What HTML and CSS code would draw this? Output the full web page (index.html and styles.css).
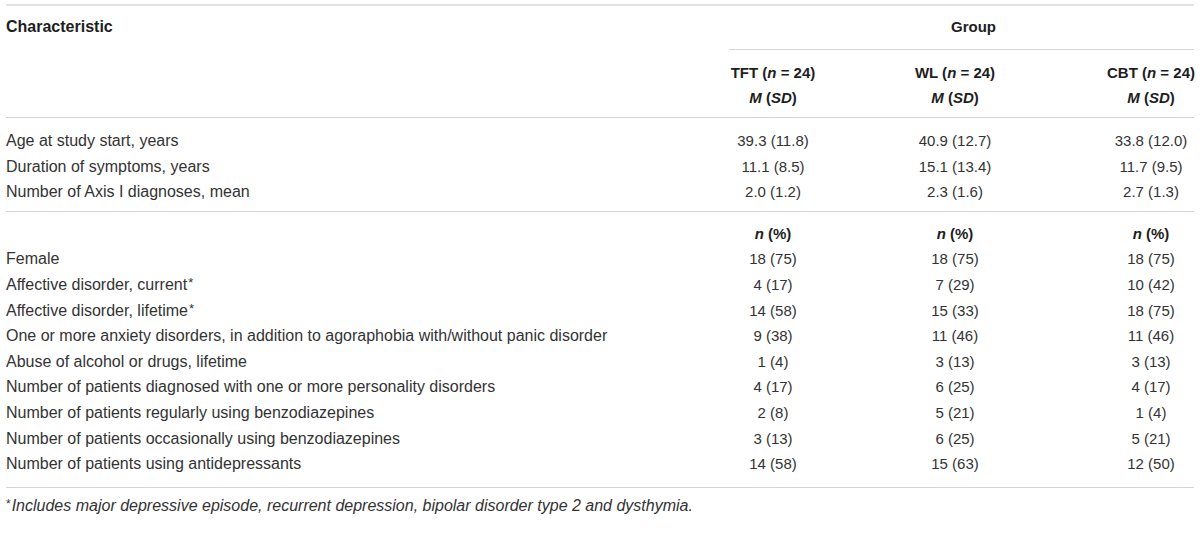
FILE: index.html
```html
<!DOCTYPE html>
<html lang="en">
<head>
<meta charset="utf-8">
<title>Table</title>
<link rel="stylesheet" href="styles.css">
</head>
<body>
<div class="table">
  <div class="head">
    <div class="h-char">Characteristic</div>
    <div class="h-group">Group</div>
    <div class="h-col"><span>TFT (<i>n</i> = 24)</span><span><i>M</i> (<i>SD</i>)</span></div>
    <div class="h-col"><span>WL (<i>n</i> = 24)</span><span><i>M</i> (<i>SD</i>)</span></div>
    <div class="h-col"><span>CBT (<i>n</i> = 24)</span><span><i>M</i> (<i>SD</i>)</span></div>
  </div>
  <div class="section first">
    <div class="lbl">Age at study start, years</div><div class="val">39.3 (11.8)</div><div class="val">40.9 (12.7)</div><div class="val">33.8 (12.0)</div>
    <div class="lbl">Duration of symptoms, years</div><div class="val">11.1 (8.5)</div><div class="val">15.1 (13.4)</div><div class="val">11.7 (9.5)</div>
    <div class="lbl">Number of Axis I diagnoses, mean</div><div class="val">2.0 (1.2)</div><div class="val">2.3 (1.6)</div><div class="val">2.7 (1.3)</div>
  </div>
  <div class="section second">
    <div class="lbl"></div><div class="val sub"><i>n</i> (%)</div><div class="val sub"><i>n</i> (%)</div><div class="val sub"><i>n</i> (%)</div>
    <div class="lbl">Female</div><div class="val">18 (75)</div><div class="val">18 (75)</div><div class="val">18 (75)</div>
    <div class="lbl">Affective disorder, current<span class="ast">*</span></div><div class="val">4 (17)</div><div class="val">7 (29)</div><div class="val">10 (42)</div>
    <div class="lbl">Affective disorder, lifetime<span class="ast">*</span></div><div class="val">14 (58)</div><div class="val">15 (33)</div><div class="val">18 (75)</div>
    <div class="lbl">One or more anxiety disorders, in addition to agoraphobia with/without panic disorder</div><div class="val">9 (38)</div><div class="val">11 (46)</div><div class="val">11 (46)</div>
    <div class="lbl">Abuse of alcohol or drugs, lifetime</div><div class="val">1 (4)</div><div class="val">3 (13)</div><div class="val">3 (13)</div>
    <div class="lbl">Number of patients diagnosed with one or more personality disorders</div><div class="val">4 (17)</div><div class="val">6 (25)</div><div class="val">4 (17)</div>
    <div class="lbl">Number of patients regularly using benzodiazepines</div><div class="val">2 (8)</div><div class="val">5 (21)</div><div class="val">1 (4)</div>
    <div class="lbl">Number of patients occasionally using benzodiazepines</div><div class="val">3 (13)</div><div class="val">6 (25)</div><div class="val">5 (21)</div>
    <div class="lbl">Number of patients using antidepressants</div><div class="val">14 (58)</div><div class="val">15 (63)</div><div class="val">12 (50)</div>
  </div>
  <p class="foot"><span class="fast">*</span><i>Includes major depressive episode, recurrent depression, bipolar disorder type 2 and dysthymia.</i></p>
</div>
</body>
</html>
```

FILE: styles.css
```css
html, body {
  margin: 0;
  padding: 0;
  background: #ffffff;
}

body {
  font-family: "Liberation Sans", Arial, Helvetica, sans-serif;
  font-size: 16px;
  color: #333333;
}

.table {
  margin: 0 6px;
  padding-top: 4px;
}

.head {
  display: grid;
  grid-template-columns: 1fr 182px 182px 148px;
  border-top: 2px solid #e2e2e2;
  border-bottom: 1px solid #d4d4d4;
  font-weight: bold;
  color: #1e1e1e;
}

.h-char {
  grid-column: 1;
  grid-row: 1;
  padding-top: 11px;
  line-height: 20px;
}

.h-group {
  grid-column: 2 / 5;
  grid-row: 1;
  margin-left: 47px;
  padding: 11px 0 12px 24px;
  text-align: center;
  font-size: 15px;
  line-height: 20px;
  border-bottom: 1px solid #d4d4d4;
}

.h-col {
  grid-row: 2;
  display: flex;
  flex-direction: column;
  align-items: center;
  padding: 10px 0 7px;
  font-size: 15px;
  line-height: 25px;
  white-space: nowrap;
}

.h-col:nth-child(3) { grid-column: 2; }
.h-col:nth-child(4) { grid-column: 3; }
.h-col:nth-child(5) { grid-column: 4; padding-left: 62px; }

.section {
  display: grid;
  grid-template-columns: 1fr 182px 182px 148px;
  border-bottom: 1px solid #d4d4d4;
  line-height: 25.6px;
}

.section.first {
  padding: 10px 0 6px;
}

.section.second {
  padding: 9px 0 10px;
}

.section > :nth-child(4n) {
  padding-left: 62px;
}

.lbl {
  white-space: nowrap;
}

.val {
  text-align: center;
  font-size: 15px;
  white-space: nowrap;
}

.sub {
  font-weight: bold;
  color: #1e1e1e;
}

.ast {
  font-size: 13px;
  vertical-align: 3px;
  line-height: 0;
  margin-left: 1px;
}

.foot {
  margin: 0;
  padding-top: 8px;
  font-size: 16px;
  line-height: 20px;
  color: #333333;
}

.fast {
  font-size: 12px;
  vertical-align: 3px;
  line-height: 0;
  margin-right: 1px;
}
```
